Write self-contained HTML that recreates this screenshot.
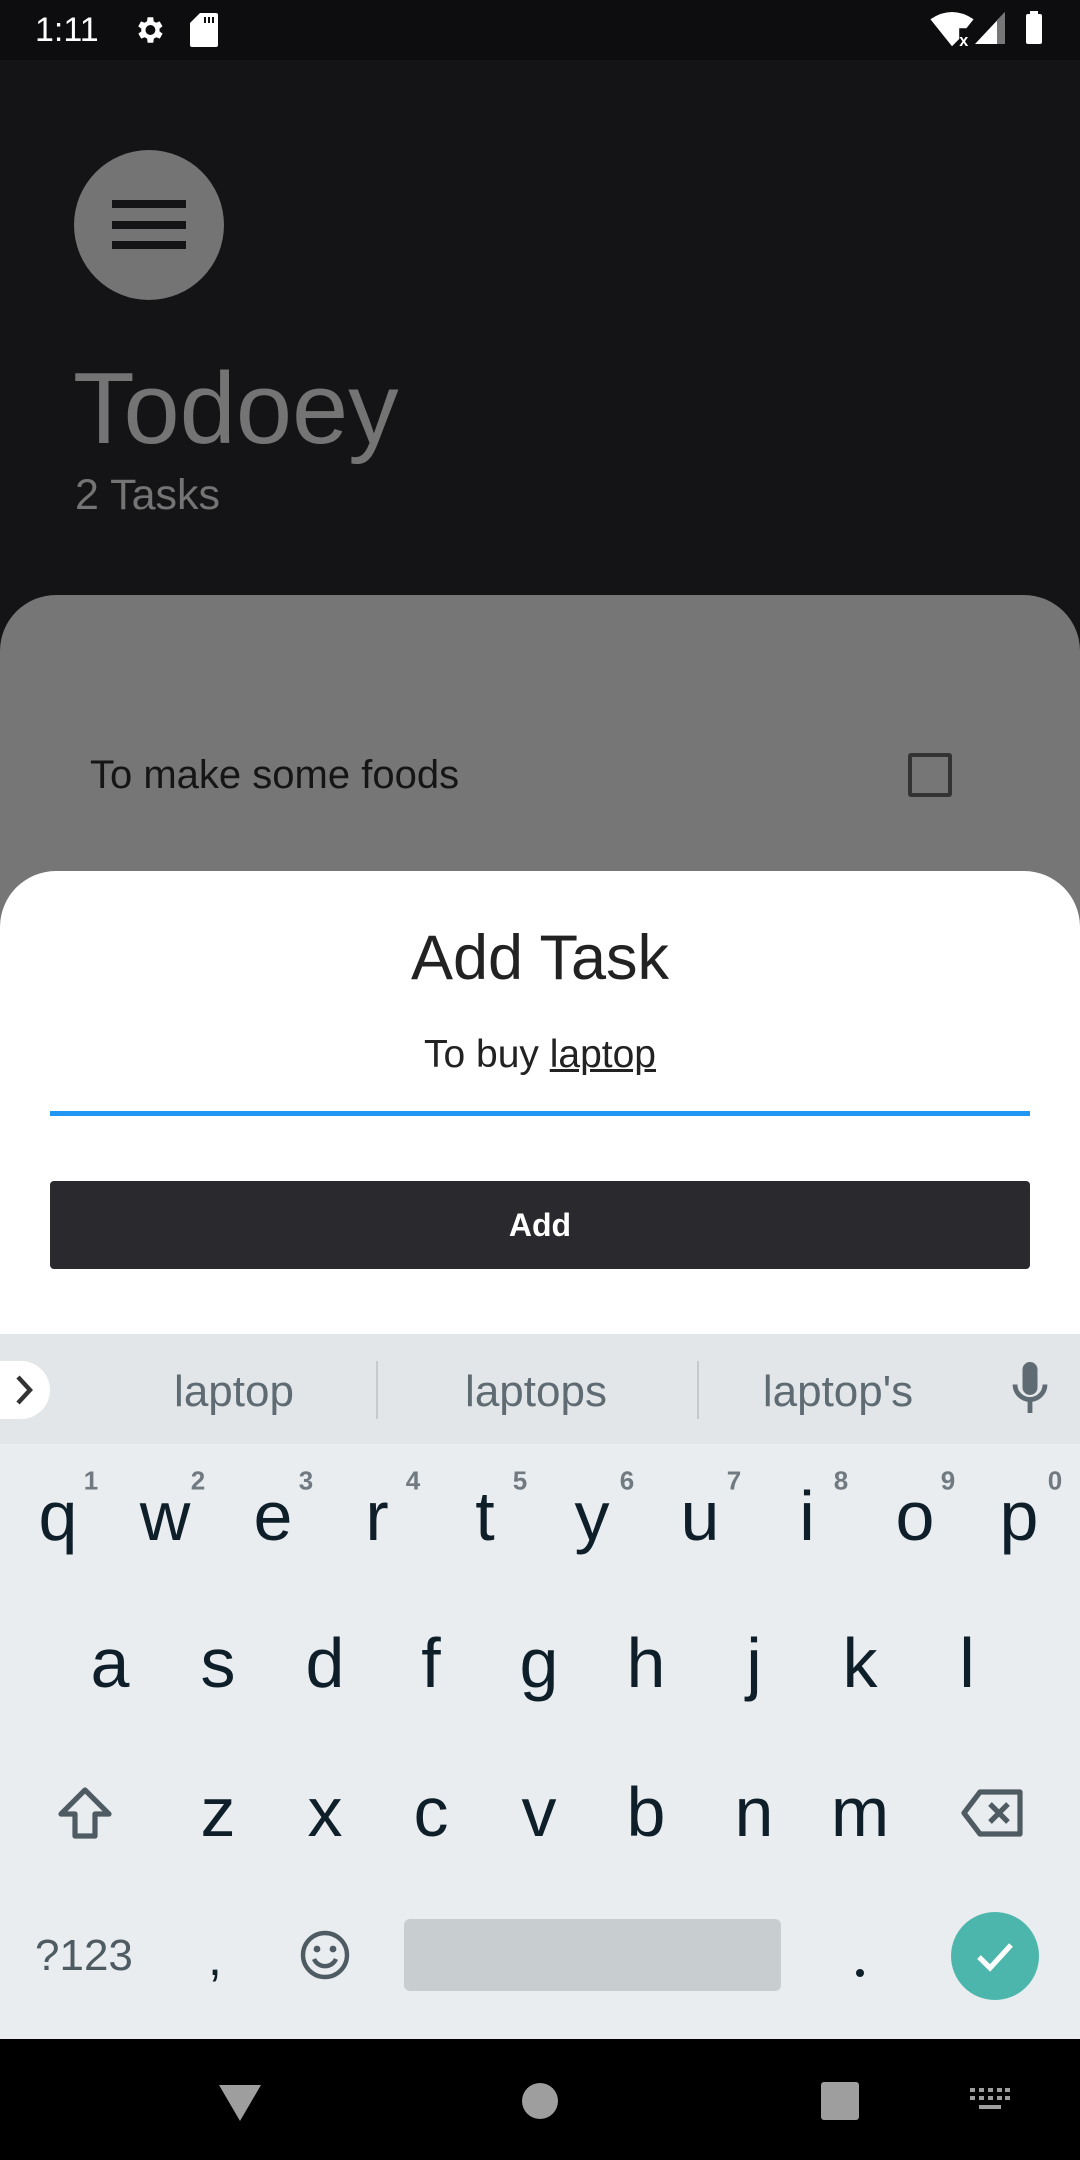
<!DOCTYPE html>
<html><head><meta charset="utf-8"><style>
*{margin:0;padding:0;box-sizing:border-box}
body{width:1080px;height:2160px;position:relative;overflow:hidden;background:#141416;font-family:"Liberation Sans",sans-serif}
.a{position:absolute}
.k{position:absolute;width:100px;height:100px;line-height:100px;text-align:center;font-size:70px;color:#0f1f2a;transform:translate(-50%,-50%)}
.n{position:absolute;font-size:26px;color:#707a80;font-weight:bold;transform:translate(-50%,-50%)}
.sg{position:absolute;top:1364px;height:56px;line-height:56px;font-size:44px;color:#5f6b73;transform:translateX(-50%)}
</style></head><body>
<div class="a" style="left:0;top:0;width:1080px;height:60px;background:#0d0d0f"></div>
<div class="a" style="left:35px;top:10px;font-size:34px;color:#fff;line-height:40px">1:11</div>
<svg class="a" style="left:132px;top:13px" width="34" height="34" viewBox="0 0 24 24"><path fill="#fff" d="M19.4 13a7.5 7.5 0 0 0 0-2l2.1-1.6-2-3.5-2.5 1a7 7 0 0 0-1.7-1L15 3h-4l-.4 2.9a7 7 0 0 0-1.7 1l-2.5-1-2 3.5L6.6 11a7.5 7.5 0 0 0 0 2l-2.1 1.6 2 3.5 2.5-1a7 7 0 0 0 1.7 1L11 21h4l.4-2.9a7 7 0 0 0 1.7-1l2.5 1 2-3.5zM13 15.5A3.5 3.5 0 1 1 13 8.5a3.5 3.5 0 0 1 0 7z"/></svg>
<svg class="a" style="left:190px;top:13px" width="28" height="34" viewBox="0 0 14 17"><path fill="#fff" d="M5 0h8a1 1 0 0 1 1 1v15a1 1 0 0 1-1 1H1a1 1 0 0 1-1-1V5z"/><path fill="#0d0d0f" d="M7 2h1v3H7zM9 2h1v3H9zM11 2h1v3h-1z"/></svg>
<svg class="a" style="left:930px;top:12px" width="44" height="36" viewBox="0 0 24 20"><path fill="#fff" d="M12 19L0 4Q12-4 24 4l-4 5h-4v6z"/><text x="16" y="19" font-size="9" fill="#fff" font-family="Liberation Sans" font-weight="bold">x</text></svg>
<svg class="a" style="left:975px;top:12px" width="30" height="32" viewBox="0 0 15 16"><path fill="#fff" d="M15 0v16H0z"/><path fill="#777" d="M11 4v12h4V0z"/></svg>
<div class="a" style="left:1026px;top:14px;width:16px;height:30px;background:#fff;border-radius:2px"></div>
<div class="a" style="left:1030px;top:11px;width:8px;height:4px;background:#fff"></div>

<div class="a" style="left:74px;top:150px;width:150px;height:150px;border-radius:50%;background:#747474"></div>
<div class="a" style="left:112px;top:200px;width:74px;height:8px;background:#141416"></div>
<div class="a" style="left:112px;top:221px;width:74px;height:8px;background:#141416"></div>
<div class="a" style="left:112px;top:241px;width:74px;height:8px;background:#141416"></div>
<div class="a" style="left:73px;top:354px;font-size:101px;line-height:110px;color:#747474">Todoey</div>
<div class="a" style="left:75px;top:470px;font-size:43px;line-height:50px;color:#747474">2 Tasks</div>

<div class="a" style="left:0;top:595px;width:1080px;height:400px;background:#767676;border-radius:56px 56px 0 0"></div>
<div class="a" style="left:90px;top:750px;font-size:40px;line-height:50px;color:#151515">To make some foods</div>
<div class="a" style="left:908px;top:753px;width:44px;height:44px;border:4px solid #333;border-radius:3px"></div>

<div class="a" style="left:0;top:871px;width:1080px;height:470px;background:#fff;border-radius:56px 56px 0 0"></div>
<div class="a" style="left:0;top:918px;width:1080px;text-align:center;font-size:63px;line-height:80px;color:#222">Add Task</div>
<div class="a" style="left:0;top:1030px;width:1080px;text-align:center;font-size:39px;line-height:50px;color:#222">To buy <span style="text-decoration:underline">laptop</span></div>
<div class="a" style="left:50px;top:1111px;width:980px;height:5px;background:#2196f3"></div>
<div class="a" style="left:50px;top:1181px;width:980px;height:88px;background:#2a292e;border-radius:4px;color:#fff;font-size:32px;font-weight:bold;text-align:center;line-height:88px">Add</div>

<div class="a" style="left:0;top:1334px;width:1080px;height:110px;background:#e2e6e9"></div>
<div class="a" style="left:0;top:1444px;width:1080px;height:595px;background:#e9edf0"></div>
<div class="a" style="left:-30px;top:1361px;width:80px;height:58px;border-radius:29px;background:#fff"></div>
<svg class="a" style="left:14px;top:1375px" width="22" height="30" viewBox="0 0 11 15"><path d="M2 1l6 6.5L2 14" stroke="#333" stroke-width="2.2" fill="none"/></svg>
<div class="sg" style="left:234px">laptop</div>
<div class="sg" style="left:536px">laptops</div>
<div class="sg" style="left:838px">laptop's</div>
<div class="a" style="left:376px;top:1361px;width:2px;height:58px;background:#c5cace"></div>
<div class="a" style="left:697px;top:1361px;width:2px;height:58px;background:#c5cace"></div>
<svg class="a" style="left:1012px;top:1362px" width="36" height="54" viewBox="0 0 12 18"><rect x="3.5" y="0" width="5" height="11" rx="2.5" fill="#5f6b73"/><path d="M1 7.5a5 5 0 0 0 10 0M6 12.5V17" stroke="#5f6b73" stroke-width="1.6" fill="none"/></svg>

<div class="k" style="left:58px;top:1516px">q</div><div class="k" style="left:165px;top:1516px">w</div><div class="k" style="left:273px;top:1516px">e</div><div class="k" style="left:377px;top:1516px">r</div><div class="k" style="left:485px;top:1516px">t</div><div class="k" style="left:592px;top:1516px">y</div><div class="k" style="left:700px;top:1516px">u</div><div class="k" style="left:807px;top:1516px">i</div><div class="k" style="left:915px;top:1516px">o</div><div class="k" style="left:1019px;top:1516px">p</div>
<div class="n" style="left:91px;top:1481px">1</div><div class="n" style="left:198px;top:1481px">2</div><div class="n" style="left:306px;top:1481px">3</div><div class="n" style="left:413px;top:1481px">4</div><div class="n" style="left:520px;top:1481px">5</div><div class="n" style="left:627px;top:1481px">6</div><div class="n" style="left:734px;top:1481px">7</div><div class="n" style="left:841px;top:1481px">8</div><div class="n" style="left:948px;top:1481px">9</div><div class="n" style="left:1055px;top:1481px">0</div>
<div class="k" style="left:110px;top:1663px">a</div><div class="k" style="left:218px;top:1663px">s</div><div class="k" style="left:325px;top:1663px">d</div><div class="k" style="left:431px;top:1663px">f</div><div class="k" style="left:539px;top:1663px">g</div><div class="k" style="left:646px;top:1663px">h</div><div class="k" style="left:754px;top:1663px">j</div><div class="k" style="left:860px;top:1663px">k</div><div class="k" style="left:967px;top:1663px">l</div>
<svg class="a" style="left:57px;top:1786px" width="56" height="54" viewBox="0 0 28 27"><path d="M14 2L2 14h7v11h10V14h7z" stroke="#4f5b62" stroke-width="2.6" fill="none" stroke-linejoin="round"/></svg>
<div class="k" style="left:218px;top:1812px">z</div><div class="k" style="left:325px;top:1812px">x</div><div class="k" style="left:431px;top:1812px">c</div><div class="k" style="left:539px;top:1812px">v</div><div class="k" style="left:646px;top:1812px">b</div><div class="k" style="left:754px;top:1812px">n</div><div class="k" style="left:860px;top:1812px">m</div>
<svg class="a" style="left:960px;top:1788px" width="66" height="50" viewBox="0 0 33 25"><path d="M10 2h20v21H10L2 12.5z" stroke="#4f5b62" stroke-width="2.6" fill="none" stroke-linejoin="round"/><path d="M15 8l9 9M24 8l-9 9" stroke="#4f5b62" stroke-width="2.6"/></svg>
<div class="a" style="left:35px;top:1930px;font-size:44px;line-height:52px;color:#4f5b62">?123</div>
<div class="a" style="left:208px;top:1932px;font-size:50px;line-height:52px;color:#0f1f2a">,</div>
<svg class="a" style="left:299px;top:1929px" width="52" height="52" viewBox="0 0 26 26"><circle cx="13" cy="13" r="11" stroke="#4f5b62" stroke-width="2.2" fill="none"/><circle cx="9" cy="10" r="1.7" fill="#4f5b62"/><circle cx="17" cy="10" r="1.7" fill="#4f5b62"/><path d="M7.5 15a6 6 0 0 0 11 0" stroke="#4f5b62" stroke-width="2.2" fill="none"/></svg>
<div class="a" style="left:404px;top:1919px;width:377px;height:72px;background:#c8cdd0;border-radius:6px"></div>
<div class="a" style="left:856px;top:1969px;width:8px;height:8px;border-radius:50%;background:#0f1f2a"></div>
<div class="a" style="left:951px;top:1912px;width:88px;height:88px;border-radius:50%;background:#4db6ac"></div>
<svg class="a" style="left:973px;top:1934px" width="44" height="44" viewBox="0 0 22 22"><path d="M3 11.5l5.5 5.5L19 5.5" stroke="#fff" stroke-width="2.6" fill="none"/></svg>

<div class="a" style="left:0;top:2039px;width:1080px;height:121px;background:#000"></div>
<svg class="a" style="left:219px;top:2085px" width="42" height="36" viewBox="0 0 42 36"><path d="M0 0h42L21 36z" fill="#9e9e9e"/></svg>
<div class="a" style="left:522px;top:2083px;width:36px;height:36px;border-radius:50%;background:#9e9e9e"></div>
<div class="a" style="left:821px;top:2082px;width:38px;height:38px;border-radius:3px;background:#9e9e9e"></div>
<svg class="a" style="left:970px;top:2088px" width="40" height="26" viewBox="0 0 40 26"><g fill="#9e9e9e"><rect x="0" y="0" width="5" height="4"/><rect x="9" y="0" width="5" height="4"/><rect x="18" y="0" width="5" height="4"/><rect x="27" y="0" width="5" height="4"/><rect x="35" y="0" width="5" height="4"/><rect x="0" y="8" width="5" height="4"/><rect x="9" y="8" width="5" height="4"/><rect x="18" y="8" width="5" height="4"/><rect x="27" y="8" width="5" height="4"/><rect x="35" y="8" width="5" height="4"/><rect x="9" y="17" width="22" height="4"/></g></svg>
</body></html>
